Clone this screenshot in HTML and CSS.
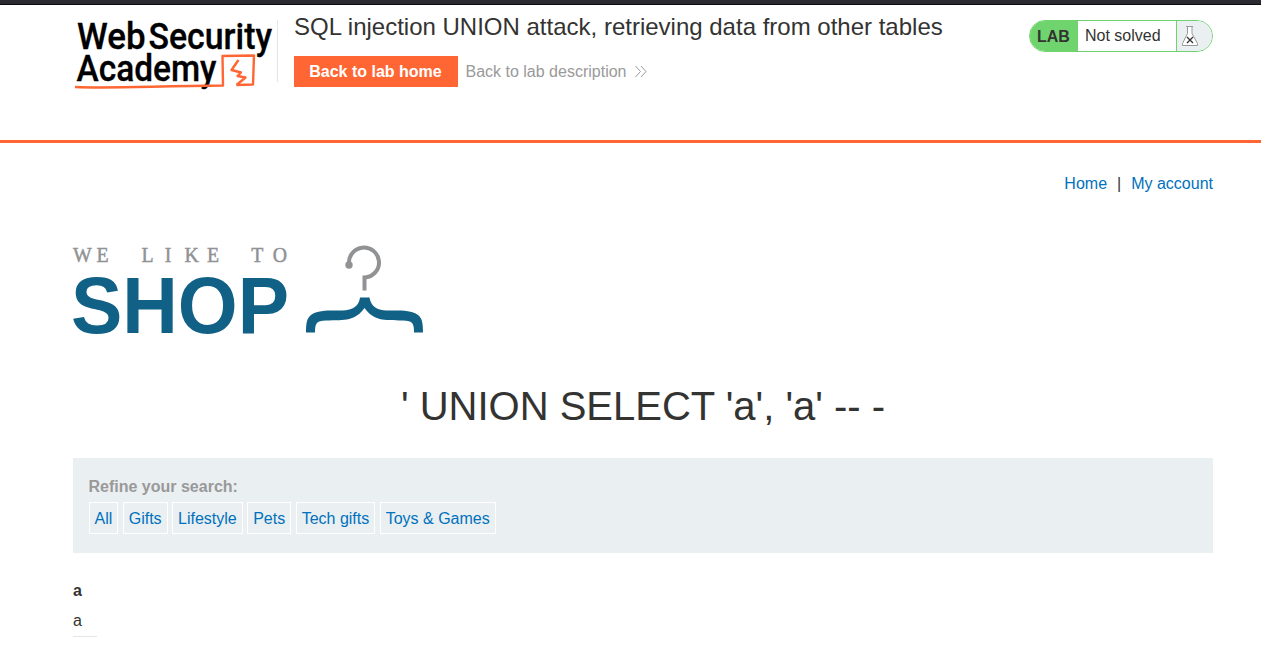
FILE: index.html
```html
<!DOCTYPE html>
<html lang="en">
<head>
<meta charset="utf-8">
<title>SQL injection UNION attack, retrieving data from other tables</title>
<link rel="stylesheet" href="styles.css">
</head>
<body>
<header class="lab-header">
  <div class="container lab-header-inner">
    <svg class="academy-logo" width="205" height="76" viewBox="0 0 205 76">
      <g class="academy-name">
        <text x="4" y="34.500" textLength="68.500" lengthAdjust="spacingAndGlyphs">Web</text>
        <text x="75.500" y="34.500" textLength="123.500" lengthAdjust="spacingAndGlyphs">Security</text>
        <text x="3.500" y="67" textLength="140" lengthAdjust="spacingAndGlyphs">Academy</text>
      </g>
      <g class="academy-mark">
        <path d="M2 73C35 74.500 70 72.500 150 71.500L149.500 42L181 41.500L180 70.500L163.500 71"/>
        <path d="M165.500 46L158.500 56L168 58.500L164.500 62L172.500 63.500L163.500 71"/>
      </g>
    </svg>
    <div class="title-block">
      <h2 class="lab-title">SQL injection UNION attack, retrieving data from other tables</h2>
      <div class="lab-links">
        <a class="button">Back to lab home</a>
        <a class="description-link">Back to lab description
          <svg width="14" height="14" viewBox="0 0 14 14"><path d="M1.500 1L6.500 6.500L1.500 12M7 1L12 6.500L7 12"/></svg>
        </a>
      </div>
    </div>
    <div class="lab-status">
      <span class="status-tag">LAB</span>
      <span class="status-text">Not solved</span>
      <span class="status-icon">
        <svg width="18" height="22" viewBox="0 0 18 22">
          <path class="flask" d="M5 1.500H12M6.500 1.500V8.500L1.500 18.500V20.500H16.500V18.500L11 8.500V1.500"/>
          <path class="cross" d="M6 12L12 18M12 12L6 18"/>
        </svg>
      </span>
    </div>
  </div>
</header>
<main class="container">
  <nav class="top-links"><a>Home</a><span>|</span><a>My account</a></nav>
  <svg class="shop-logo" width="352" height="90" viewBox="0 0 352 90">
    <text class="shop-tagline" transform="scale(.9 1)" y="17" x="0 26 52 76 102 124 149 175 198 222">WE LIKE TO</text>
    <text class="shop-name" x="-2" y="88" textLength="218" lengthAdjust="spacingAndGlyphs">SHOP</text>
    <path class="hook" d="M276.300 20.500A15 15 0 1 1 291.500 32.500V45.500"/>
    <circle class="hook-end" cx="276" cy="20" r="3.700"/>
    <path class="hanger" d="M287 52.500H296.500C298 61 303 65 314 65.500C328 65.500 338 65 345 70C349 73 350 78 350 87.500H341C341 79 340 75.500 330 75.500C310 75 301 76 291.500 63C282 76 273 75 253 75.500C243 75.500 242 79 242 87.500H233C233 78 234 73 238 70C245 65 255 65.500 269 65.500C280 65 286 61 287 52.500Z"/>
  </svg>
  <h1 class="search-title">' UNION SELECT 'a', 'a' -- -</h1>
  <section class="filters">
    <div class="filters-label">Refine your search:</div>
    <div class="filter-list">
      <a>All</a>
      <a>Gifts</a>
      <a>Lifestyle</a>
      <a>Pets</a>
      <a>Tech gifts</a>
      <a>Toys &amp; Games</a>
    </div>
  </section>
  <div class="results">
    <div class="result-name">a</div>
    <div class="result-text">a</div>
  </div>
</main>
</body>
</html>
```
FILE: styles.css
```css
* { box-sizing: border-box; }
body {
  margin: 0;
  height: 651px;
  overflow: hidden;
  background: #fff;
  color: #333332;
  font: 16px/20px "Liberation Sans", Arial, sans-serif;
}
.container { width: 1140px; margin-left: 73px; }
.lab-header {
  height: 143px;
  border-top: 4px solid #2b2a33;
  border-bottom: 3px solid #ff6633;
  box-shadow: inset 0 1px #0c0c0d;
}
.lab-header-inner { display: flex; align-items: flex-start; padding-top: 10px; }
.academy-logo {
  width: 205px;
  height: 76px;
  overflow: visible;
  background: linear-gradient(#e5e5e5, #e5e5e5) right 6px / 1px 62px no-repeat;
}
.academy-name { font: 500 37.5px Roboto, sans-serif; fill: #000; stroke: #000; stroke-width: .3; }
.academy-mark { fill: none; stroke: #ff6633; stroke-width: 2.4; stroke-linejoin: round; }
.title-block { margin-left: 16px; }
.lab-title { margin: 0; font-size: 24px; font-weight: 400; line-height: 26px; white-space: nowrap; }
.lab-links { display: flex; align-items: center; margin-top: 16px; }
.button {
  width: 164px;
  height: 31px;
  padding-right: 1px;
  background: #ff6633;
  color: #fff;
  font-weight: 700;
  line-height: 31px;
  text-align: center;
}
.description-link { display: flex; align-items: center; gap: 8px; margin-left: 7.5px; color: #999; }
.description-link svg { fill: none; stroke: #999; stroke-width: 1; }
.lab-status {
  display: flex;
  width: 184px;
  height: 32px;
  margin: 6px 0 0 auto;
  overflow: hidden;
  border: 1px solid #70d46e;
  border-radius: 16px;
  line-height: 30px;
}
.status-tag { width: 48px; padding: 1px 0 0 7px; background: #70d46e; font-size: 16px; font-weight: 700; }
.status-text { width: 99px; padding-left: 7px; border-right: 1px solid #70d46e; }
.status-icon { flex: 1; padding: 4px 0 0 4px; background: #eaeff2; }
.status-icon svg { display: block; }
.flask { fill: #fff; stroke: #999; stroke-width: 1; }
.cross { fill: none; stroke: #333; stroke-width: 1.3; }
.top-links { display: flex; justify-content: flex-end; gap: 10px; padding-top: 31px; }
.top-links a, .filter-list a { color: #0071bc; }
.shop-logo { display: block; width: 352px; height: 90px; margin-top: 51px; overflow: visible; }
.shop-tagline { font: 22px "Liberation Serif", serif; fill: #909294; stroke: #909294; stroke-width: .5; }
.shop-name { font: 700 80px "Liberation Sans", sans-serif; fill: #116086; }
.hook { fill: none; stroke: #909294; stroke-width: 4; }
.hook-end { fill: #909294; }
.hanger { fill: #116086; }
.search-title { margin: 46px 0 0; font-size: 40px; font-weight: 400; line-height: 50px; text-align: center; }
.filters { height: 95px; margin-top: 27px; padding: 19px 15.5px; background: #eaeff2; }
.filters-label { color: #999; font-weight: 700; }
.filter-list { display: flex; gap: 4.45px; margin-top: 5px; }
.filter-list a { height: 32px; padding: 0 5px; border: 1px solid #fff; line-height: 31px; }
.results { width: 24px; margin-top: 28px; padding-bottom: 5px; border-bottom: 1px solid #e5e5e5; }
.result-name { font-weight: 700; }
.result-text { margin-top: 10px; }
```
